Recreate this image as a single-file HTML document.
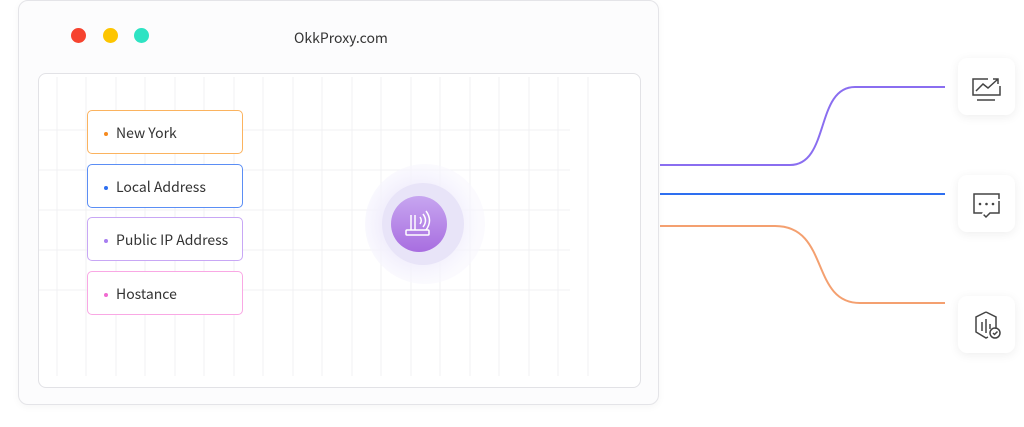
<!DOCTYPE html>
<html><head><style>
body{margin:0;width:1024px;height:427px;background:#fff;font-family:"Noto Sans CJK SC","Liberation Sans",sans-serif;position:relative;overflow:hidden}
.win{position:absolute;left:18px;top:0;width:641px;height:405px;border:1px solid #e4e4e8;border-radius:10px;background:#fcfcfd;box-shadow:0 2px 8px rgba(0,0,0,.04);box-sizing:border-box}
.dot{position:absolute;top:28px;width:15px;height:15px;border-radius:50%}
.title{position:absolute;left:294px;top:28px;font-size:14px;color:#333;line-height:20px}
.panel{position:absolute;left:38px;top:73px;width:603px;height:315px;border:1px solid #e2e2e6;border-radius:8px;background:#fff;box-sizing:border-box;overflow:hidden}
.box{position:absolute;left:87px;width:156px;height:44px;border:1.5px solid;border-radius:5px;background:#fff;box-sizing:border-box;font-size:14px;color:#333;line-height:41px;padding-top:2px;padding-left:28px}
.box i{position:absolute;left:16px;top:19px;width:4px;height:4px;border-radius:50%}
.card{position:absolute;left:958px;width:57px;height:57px;border-radius:9px;background:#fff;box-shadow:0 2px 10px rgba(0,0,0,.07)}
</style></head><body>
<div class="win"></div>
<div class="dot" style="left:71px;background:#f6432f"></div>
<div class="dot" style="left:103px;background:#fdc500"></div>
<div class="dot" style="left:134px;background:#2ee3c3"></div>
<div class="title">OkkProxy.com</div>
<div class="panel"></div>
<svg style="position:absolute;left:0;top:0" width="1024" height="427">
<g stroke="#f0f0f3" stroke-width="1">
<line x1="57" y1="77" x2="57" y2="376"/><line x1="86" y1="77" x2="86" y2="376"/><line x1="116" y1="77" x2="116" y2="376"/><line x1="145" y1="77" x2="145" y2="376"/><line x1="175" y1="77" x2="175" y2="376"/><line x1="204" y1="77" x2="204" y2="376"/><line x1="234" y1="77" x2="234" y2="376"/><line x1="263" y1="77" x2="263" y2="376"/><line x1="293" y1="77" x2="293" y2="376"/><line x1="322" y1="77" x2="322" y2="376"/><line x1="352" y1="77" x2="352" y2="376"/><line x1="381" y1="77" x2="381" y2="376"/><line x1="411" y1="77" x2="411" y2="376"/><line x1="440" y1="77" x2="440" y2="376"/><line x1="470" y1="77" x2="470" y2="376"/><line x1="499" y1="77" x2="499" y2="376"/><line x1="529" y1="77" x2="529" y2="376"/><line x1="558" y1="77" x2="558" y2="376"/><line x1="588" y1="77" x2="588" y2="376"/>
<line x1="39" y1="130" x2="570" y2="130"/><line x1="39" y1="170" x2="570" y2="170"/><line x1="39" y1="210" x2="570" y2="210"/><line x1="39" y1="250" x2="570" y2="250"/><line x1="39" y1="290" x2="570" y2="290"/>
</g>
<defs>
<linearGradient id="g2" x1="0" y1="0" x2="0" y2="1"><stop offset="0" stop-color="#c7a6f0"/><stop offset="1" stop-color="#a86ee0"/></linearGradient>
<radialGradient id="g0" cx="0.45" cy="0.5" r="0.5"><stop offset="0.6" stop-color="#f1eefc"/><stop offset="1" stop-color="#f8f7fe" stop-opacity="0.6"/></radialGradient></defs>
<circle cx="425" cy="224" r="60" fill="url(#g0)"/>
<circle cx="423" cy="224" r="41" fill="#e8e4f8"/>
<circle cx="419" cy="224" r="28" fill="url(#g2)"/>
<g stroke="#fff" stroke-width="1.5" fill="none">
<line x1="411" y1="215" x2="411" y2="230"/><line x1="415" y1="215" x2="415" y2="230"/>
<rect x="406" y="230" width="23" height="5" rx="1"/>
<path d="M420 217 q2.5 3.5 0 7 M423 214 q5 6.5 0 13 M426 211 q7 9.5 0 19"/>
</g>
<path d="M660 165 H790 C830 165 815 87 855 87 H945" stroke="#8a6ef0" stroke-width="2" fill="none"/>
<line x1="660" y1="194" x2="945" y2="194" stroke="#2e6ff0" stroke-width="2"/>
<path d="M660 226 H775 C830 226 810 303 860 303 H945" stroke="#f4a070" stroke-width="2" fill="none"/>
</svg>
<div class="box" style="top:110px;border-color:#fbb35f"><i style="background:#f58a1f;top:21px"></i>New York</div>
<div class="box" style="top:164px;border-color:#5b8ef5"><i style="background:#2e6ff0;top:21px"></i>Local Address</div>
<div class="box" style="top:217px;border-color:#c8a7f5"><i style="background:#a77ef0;top:21px"></i>Public IP Address</div>
<div class="box" style="top:271px;border-color:#f9a8e4"><i style="background:#f06ad0;top:21px"></i>Hostance</div>
<div class="card" style="top:58px"><svg width="57" height="57"><g stroke="#444" stroke-width="1.5" fill="none"><path d="M30 21 H15 V37 H42 V28"/><line x1="19" y1="42" x2="37" y2="42"/><path d="M18 33 L25 26 L30 30 L40 21 M35 21 H40 V26"/></g></svg></div>
<div class="card" style="top:175px"><svg width="57" height="57"><g stroke="#444" stroke-width="1.5" fill="none"><path d="M16 19 H41 V38 H32 L28 42 L24 38 H16 Z" stroke-dasharray="30 2"/></g><g fill="#444"><circle cx="22" cy="29" r="1.3"/><circle cx="28.5" cy="29" r="1.3"/><circle cx="35" cy="29" r="1.3"/></g></svg></div>
<div class="card" style="top:296px"><svg width="57" height="57"><g stroke="#444" stroke-width="1.5" fill="none"><path d="M28 16 L38 21 V33 M28 16 L18 21 V36 L28 42 L30 41"/><line x1="24" y1="26" x2="24" y2="35"/><line x1="28" y1="23" x2="28" y2="37"/><line x1="32" y1="28" x2="32" y2="33"/><circle cx="37" cy="37" r="5"/><path d="M35 37 l1.5 1.5 l3 -3"/></g></svg></div>
</body></html>
